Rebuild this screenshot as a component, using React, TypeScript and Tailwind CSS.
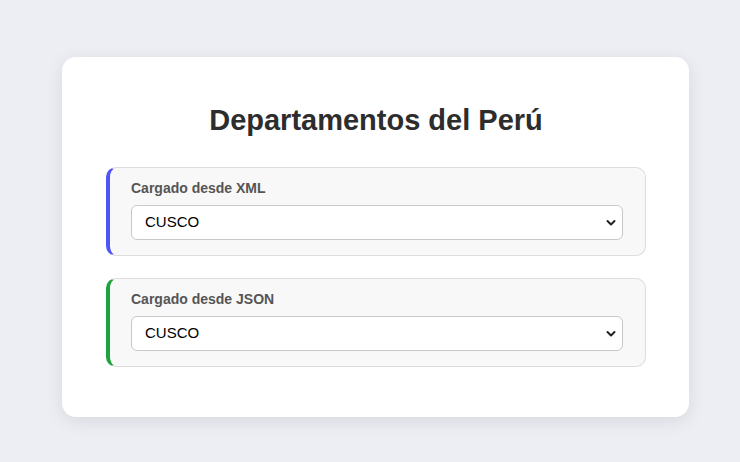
import React, { useState } from "react";

const departamentos = ["AMAZONAS", "ÁNCASH", "APURÍMAC", "AREQUIPA", "AYACUCHO", "CAJAMARCA", "CUSCO", "HUANCAVELICA", "LIMA", "PUNO"];

const Chevron: React.FC = () => (
    <svg className="pointer-events-none absolute right-[7px] top-1/2 -translate-y-1/2" width="10" height="7" viewBox="0 0 10 7">
        <path d="M1.5 1.5 L5 5 L8.5 1.5" fill="none" stroke="#222" strokeWidth="2" strokeLinecap="round" strokeLinejoin="round" />
    </svg>
);

const Fuente: React.FC<{ label: string; borderColor: string }> = ({ label, borderColor }) => {
    const [value, setValue] = useState("CUSCO");
    return (
        <div className={`rounded-[10px] border border-[#dddddd] border-l-4 ${borderColor} bg-[#f8f8f8] pt-[12px] pb-[15px] pl-[21px] pr-[22px]`}>
            <label className="block text-[14px] leading-[17px] font-bold text-[#555555] mb-[8px]">{label}</label>
            <div className="relative">
                <select
                    value={value}
                    onChange={e => setValue(e.target.value)}
                    className="block w-full h-[35px] appearance-none rounded-[6px] border border-[#c8c8c8] bg-white pl-[13px] pr-8 text-[15px] text-black focus:outline-none"
                >
                    {departamentos.map(d => (
                        <option key={d} value={d}>{d}</option>
                    ))}
                </select>
                <Chevron />
            </div>
        </div>
    );
};

export default function App() {
    return (
        <div className="min-h-screen bg-[#eceef3] pt-[57px] px-[62px] font-['Liberation_Sans',Arial,sans-serif]">
            <div className="w-[627px] rounded-[14px] bg-white px-[44px] pr-[43px] pt-[47px] pb-[50px] shadow-[0_4px_18px_rgba(0,0,0,0.09)]">
                <h1 className="text-center text-[29px] leading-[33px] font-bold text-[#2d2d2d] mb-[30px]">Departamentos del Perú</h1>
                <div className="flex flex-col gap-[22px]">
                    <Fuente label="Cargado desde XML" borderColor="border-l-[#4f55f5]" />
                    <Fuente label="Cargado desde JSON" borderColor="border-l-[#1ea33c]" />
                </div>
            </div>
        </div>
    );
}
